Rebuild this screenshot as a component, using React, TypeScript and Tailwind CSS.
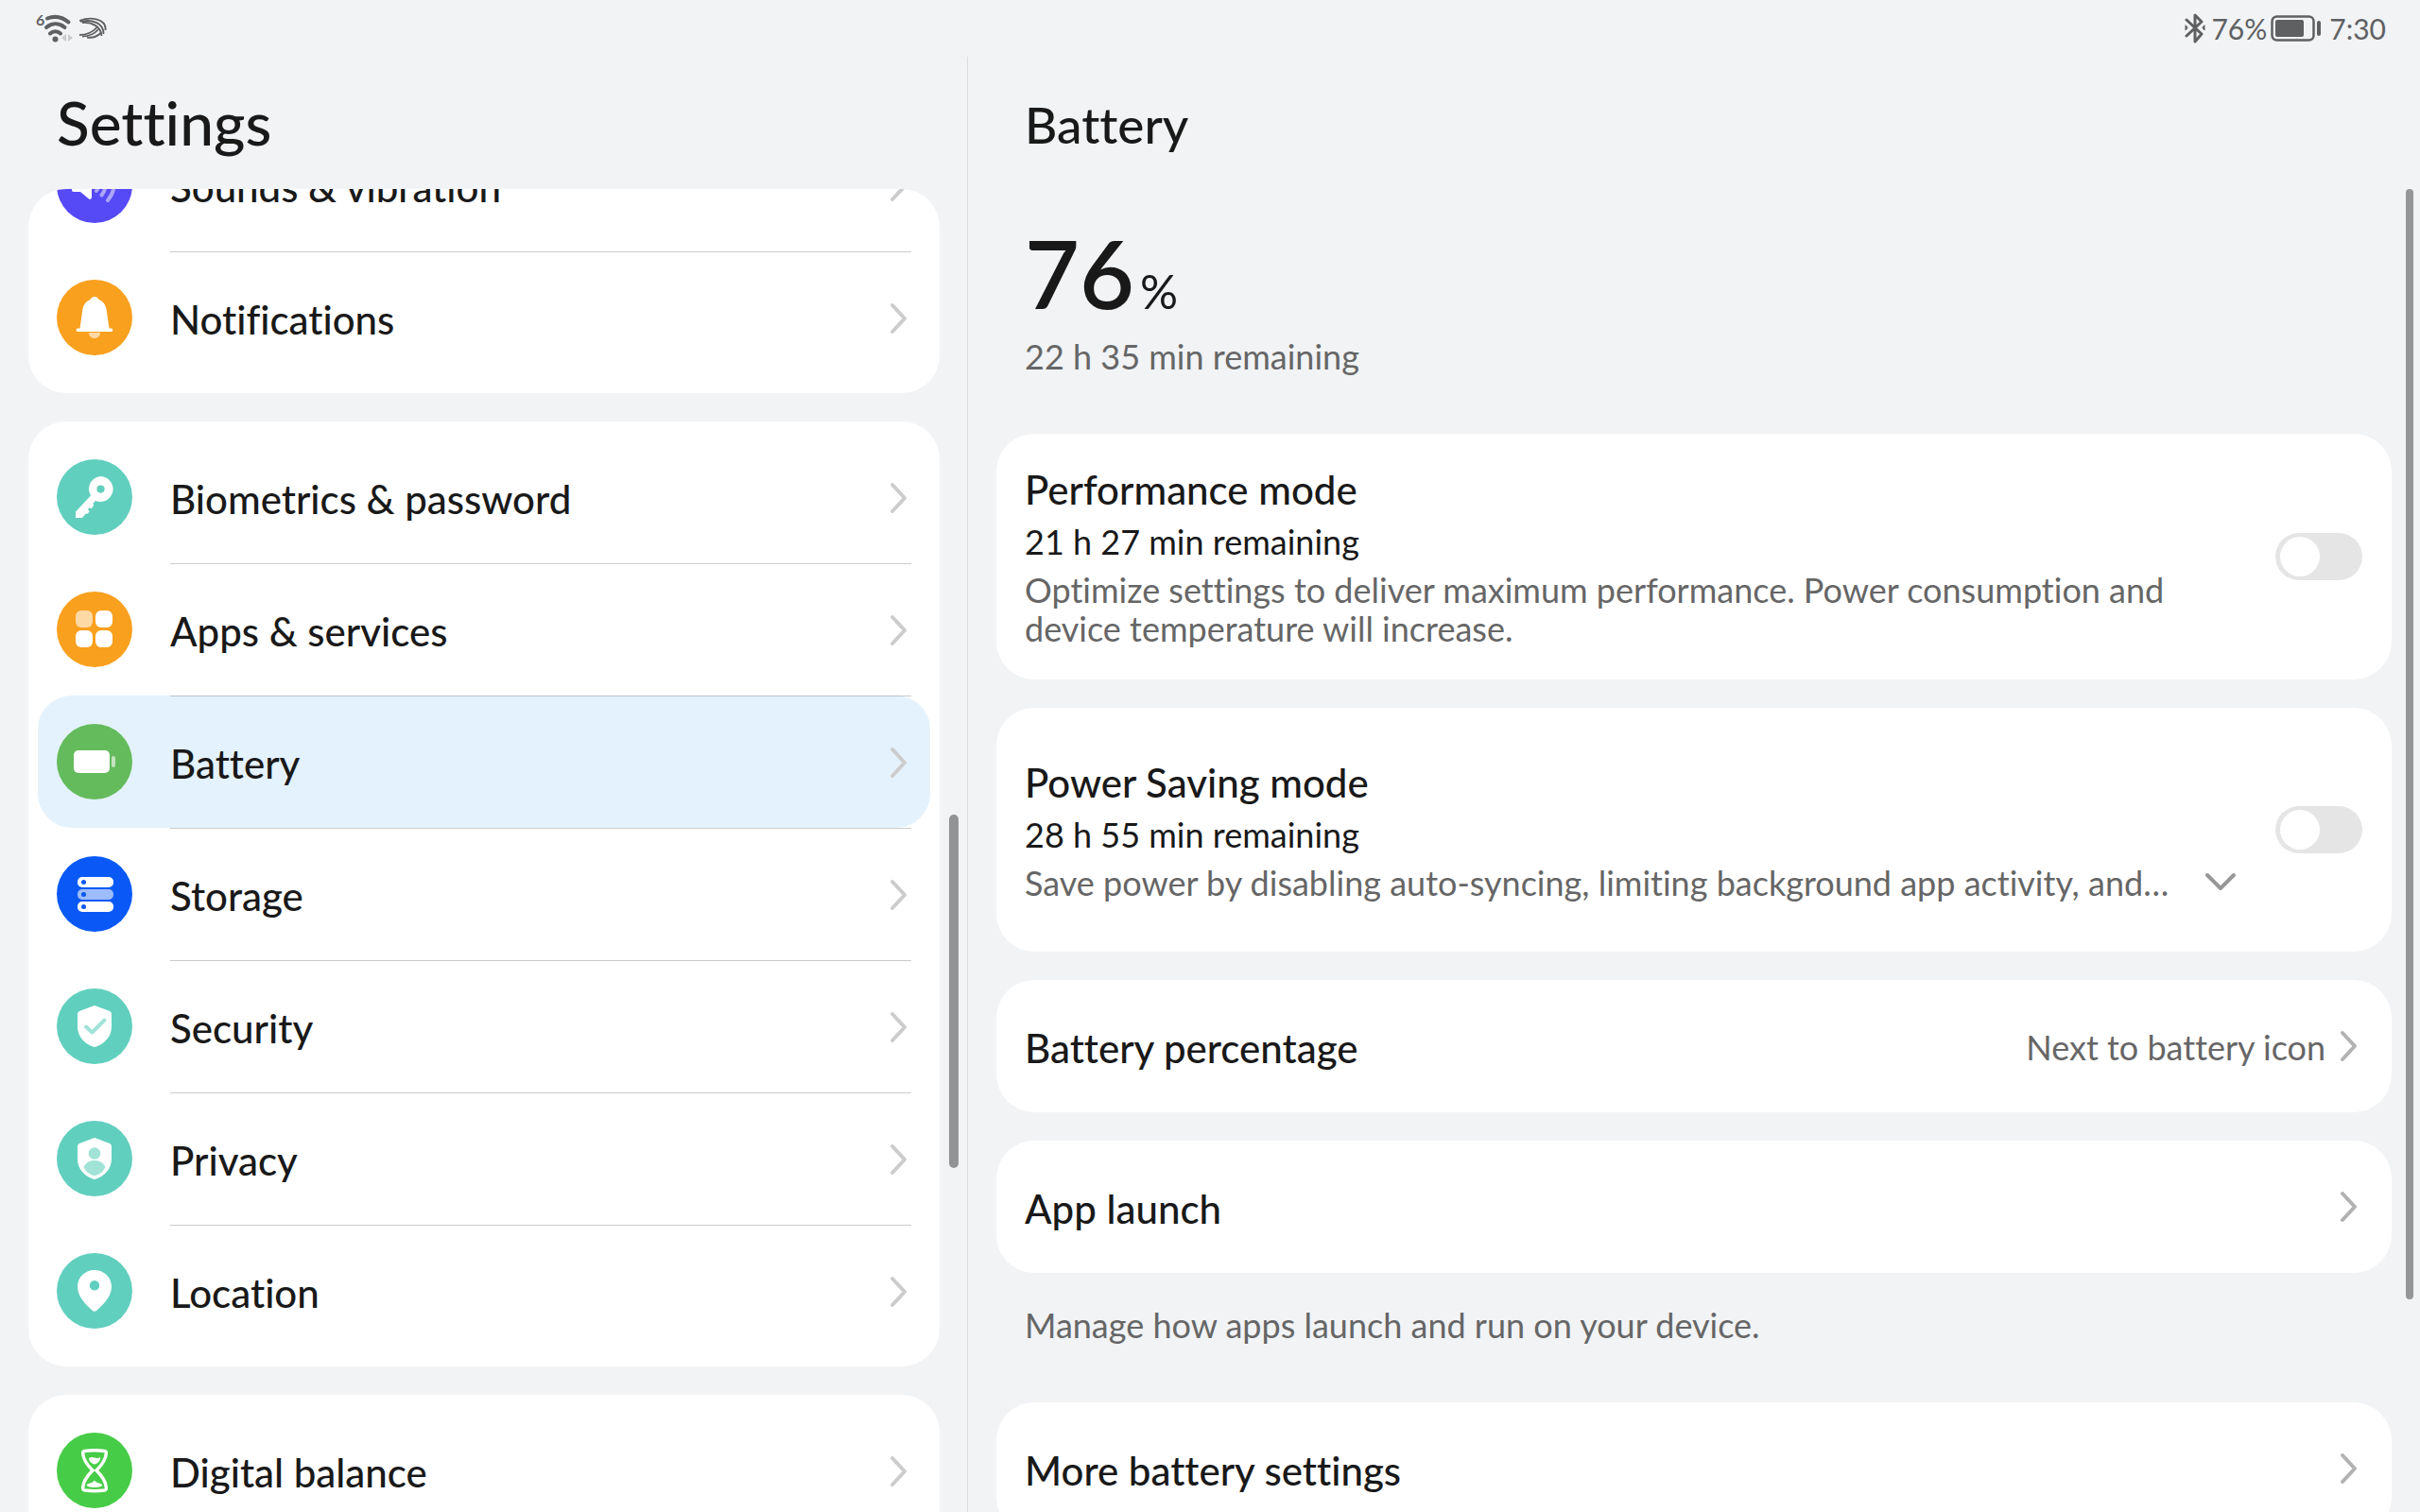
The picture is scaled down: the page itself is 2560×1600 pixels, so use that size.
import type { ReactNode } from "react";

const ChevronRight = ({ className }: { className: string }) => (
  <svg
    className={`h-9 w-6 shrink-0 ${className}`}
    viewBox="0 0 24 36"
    fill="none"
    stroke="currentColor"
    strokeWidth="4"
    strokeLinecap="round"
    strokeLinejoin="round"
  >
    <path d="M4 4l13 14L4 32" />
  </svg>
);

const icons: Record<string, ReactNode> = {
  sound: (
    <>
      <path
        d="M18 33h7l9-7.500c1-1 3 0 3 1.500v26c0 1.500-2 2.500-3 1.500L25 47h-7c-1.500 0-2-1-2-2V35c0-1 .5-2 2-2z"
        fill="#fff"
      />
      <g stroke="#fff" strokeOpacity=".5" strokeWidth="4" strokeLinecap="round" fill="none">
        <path d="M42 34q4 6 0 12" />
        <path d="M47.500 29.500q8 10.500 0 21" />
        <path d="M54 24q13 16 0 32" />
      </g>
    </>
  ),
  bell: (
    <>
      <path
        d="M40 18c-2.500 0-4 1.500-4.500 3C30 23 27.500 28 27 34l-2.500 17.500H22a1.800 1.800 0 0 0 0 3.500h36a1.800 1.800 0 0 0 0-3.500h-2.500L53 34c-.5-6-3-11-8.500-13-.5-1.500-2-3-4.500-3z"
        fill="#fff"
      />
      <path d="M34 56h12c0 3.500-2.500 6-6 6s-6-2.500-6-6z" fill="#fff" fillOpacity=".6" />
    </>
  ),
  key: (
    <path
      fill="#fff"
      fillRule="evenodd"
      d="M46.500 18a13.500 13.500 0 1 1-5.500 26l-2.500 2.500.5 2.500-2 3-3-.5-1 1.500 1.500 2-1.500 2.500-2.500.3L27 62h-7v-6.500l16-17A13.500 13.500 0 0 1 46.500 18zm0 9.500a4 4 0 1 0 0 8.200 4 4 0 0 0 0-8.200z"
    />
  ),
  apps: (
    <g fill="#fff">
      <rect x="20" y="20" width="18" height="18" rx="6" fillOpacity=".6" />
      <rect x="41" y="20" width="18" height="18" rx="6" />
      <rect x="20" y="41" width="18" height="18" rx="6" />
      <rect x="41" y="41" width="18" height="18" rx="6" />
    </g>
  ),
  battery: (
    <g fill="#fff">
      <rect x="18" y="28" width="38" height="24" rx="5" />
      <rect x="58" y="34" width="4" height="12" rx="2" fillOpacity=".6" />
    </g>
  ),
  storage: (
    <>
      <rect x="22" y="22" width="38" height="11" rx="5" fill="#fff" />
      <rect x="22" y="35" width="38" height="11" rx="5" fill="#fff" fillOpacity=".6" />
      <rect x="22" y="48" width="38" height="11" rx="5" fill="#fff" />
      <g fill="#0a59f7">
        <circle cx="28.500" cy="27.500" r="2.500" />
        <circle cx="28.500" cy="40.500" r="2.500" />
        <circle cx="28.500" cy="53.500" r="2.500" />
      </g>
    </>
  ),
  security: (
    <>
      <path
        d="M38.500 18.500q1.500-.8 3 0L56 24q2 .8 2 3v13c0 11-7 18-16 21.500q-2 .8-4 0C29 58 22 51 22 40V27q0-2.200 2-3z"
        fill="#fff"
      />
      <path
        d="M31 40.500l6.500 6 13-13"
        fill="none"
        stroke="#a2e3d8"
        strokeWidth="4"
        strokeLinecap="round"
        strokeLinejoin="round"
      />
    </>
  ),
  privacy: (
    <>
      <path
        d="M38.500 18.500q1.500-.8 3 0L56 24q2 .8 2 3v13c0 11-7 18-16 21.500q-2 .8-4 0C29 58 22 51 22 40V27q0-2.200 2-3z"
        fill="#fff"
      />
      <circle cx="40" cy="34.500" r="6.300" fill="#a2e3d8" />
      <path
        d="M28.500 49c2-4.500 6-7 11.500-7s9.500 2.500 11.500 7c-2.500 5-6.500 8.500-11.500 9-5-.5-9-4-11.500-9z"
        fill="#a2e3d8"
      />
    </>
  ),
  location: (
    <path
      fill="#fff"
      fillRule="evenodd"
      d="M40 18c10 0 18 7.500 18 17.500C58 45 51 53 42 61q-2 1.500-4 0C29 53 22 45 22 35.500 22 25.500 30 18 40 18zm0 11a5.200 5.200 0 1 0 0 10.400A5.200 5.200 0 0 0 40 29z"
    />
  ),
  hourglass: (
    <>
      <path
        d="M29.500 19.500q10.500-1.500 21 0 2 .3 1.800 2.500C52 29 46 36 42 40c4 4 10 11 10.300 18 .2 2.200 0 2.700-1.800 3q-10.500 1.500-21 0c-1.800-.3-2-.8-1.800-3C28 51 34 44 38 40c-4-4-10-11-10.300-18q-.2-2.200 1.800-2.500z"
        fill="none"
        stroke="#fff"
        strokeWidth="3.500"
      />
      <path d="M34 27q3-1.500 6-.5t6-.5c1 3-2.500 7-6 7.500-3-.5-6-3.500-6-6.500z" fill="#fff" />
      <path d="M32 55c2-2 6-1.500 8-4.500 2 3 6 2.500 8 4.500 1.500 2-4 3-8 3s-9.500-1-8-3z" fill="#fff" />
    </>
  ),
};

interface MenuItem {
  label: string;
  icon: string;
  color: string;
  active?: boolean;
}

const groups: MenuItem[][] = [
  [
    { label: "Sounds & vibration", icon: "sound", color: "bg-[#564af7]" },
    { label: "Notifications", icon: "bell", color: "bg-[#f9a01e]" },
  ],
  [
    { label: "Biometrics & password", icon: "key", color: "bg-[#61cfbe]" },
    { label: "Apps & services", icon: "apps", color: "bg-[#f9a01e]" },
    { label: "Battery", icon: "battery", color: "bg-[#64bb5c]", active: true },
    { label: "Storage", icon: "storage", color: "bg-[#0a59f7]" },
    { label: "Security", icon: "security", color: "bg-[#61cfbe]" },
    { label: "Privacy", icon: "privacy", color: "bg-[#61cfbe]" },
    { label: "Location", icon: "location", color: "bg-[#61cfbe]" },
  ],
  [{ label: "Digital balance", icon: "hourglass", color: "bg-[#47cc47]" }],
];

const MenuRow = ({ item, first }: { item: MenuItem; first: boolean }) => (
  <li>
    <a
      href="#"
      aria-current={item.active ? "page" : undefined}
      className={`flex h-[140px] items-center rounded-[36px] pl-5 ${item.active ? "bg-[#e4f2fd]" : ""}`}
    >
      <span className={`mr-10 size-20 shrink-0 rounded-full ${item.color}`}>
        <svg viewBox="0 0 80 80" className="size-20">
          {icons[item.icon]}
        </svg>
      </span>
      <span
        className={`mr-5 flex h-full flex-1 items-center justify-between border-t ${first ? "border-transparent" : "border-black/20"}`}
      >
        <span className="pt-[2px] text-[42px] leading-[48px] font-medium">{item.label}</span>
        <ChevronRight className="text-[#cccccc]" />
      </span>
    </a>
  </li>
);

const StatusBar = () => (
  <header className="flex h-[60px] shrink-0 items-center justify-between pr-9 pl-[38px] text-[#5f6062]">
    <div className="flex items-center gap-[6px]">
      <svg viewBox="0 0 40 40" className="size-10" fill="none" stroke="currentColor">
        <text x="0" y="17" fontSize="16" fontWeight="700" fill="currentColor" stroke="none">
          6
        </text>
        <g strokeWidth="4" strokeLinecap="round">
          <path d="M12 9.500c8-3 16-1.500 22.500 4" />
          <path d="M11 19c6-5 13.500-5 19.500 0" />
          <path d="M15 25.500c3-3 8-3 11 0" />
        </g>
        <circle cx="20.500" cy="31.500" r="3" fill="currentColor" stroke="none" />
        <path d="M32 26v8l-5-4zM34 26v8l5-4z" fill="#c9cacc" stroke="none" />
      </svg>
      <svg
        viewBox="0 0 30 24"
        className="h-6 w-[30px]"
        fill="none"
        stroke="currentColor"
        strokeWidth="1.800"
      >
        <path d="M0 4c12-5 29-2 27.500 10" />
        <path d="M1 5c12-3 25 1 24.500 13" />
        <path d="M3 6c10-1 20 4 20.500 14" />
        <path d="M0 19c8 0 14-3 18.500-8" />
        <path d="M3 20.500c7 0 13-2.500 17-7.500" />
        <path d="M8 21.500c6 1 11-1 15-5" />
      </svg>
    </div>
    <div className="flex items-center text-[30px] leading-9">
      <svg
        viewBox="0 0 22 32"
        className="mr-[6px] h-8 w-[22px]"
        fill="none"
        stroke="currentColor"
        strokeWidth="3"
        strokeLinejoin="round"
        strokeLinecap="round"
      >
        <path d="M2 7l16 15-7 8V2l7 7L2 24" />
        <path d="M1 13v5l2-2.500zM21 13v5l-2-2.500z" fill="currentColor" strokeWidth="1" />
      </svg>
      <span>76%</span>
      <svg viewBox="0 0 54 28" className="ml-1 h-7 w-[54px]">
        <rect
          x="1.500"
          y="1.500"
          width="44"
          height="25"
          rx="5"
          fill="none"
          stroke="currentColor"
          strokeWidth="2.500"
        />
        <rect x="5" y="5" width="30" height="18" rx="2" fill="currentColor" />
        <rect x="49" y="6" width="4" height="16" rx="2" fill="currentColor" />
      </svg>
      <time className="ml-2">7:30</time>
    </div>
  </header>
);

const Switch = ({ id }: { id: string }) => (
  <span className="relative flex h-[50px] w-[92px] shrink-0">
    <input
      id={id}
      type="checkbox"
      role="switch"
      className="peer h-full w-full appearance-none rounded-full bg-[#e5e5e5] checked:bg-[#0a59f7]"
    />
    <span className="pointer-events-none absolute top-1 left-[5px] size-[42px] rounded-full bg-white peer-checked:left-[45px]" />
  </span>
);

const LinkCard = ({ label, value }: { label: string; value?: string }) => (
  <a
    href="#"
    className="flex h-[140px] shrink-0 items-center rounded-[40px] bg-white pr-8 pl-[30px]"
  >
    <span className="flex-1 pt-1 text-[42px] leading-[48px] font-medium">{label}</span>
    {value && (
      <span className="mr-[14px] pt-[2px] text-[36px] leading-[42px] text-[#666666]">
        {value}
      </span>
    )}
    <ChevronRight className="text-[#b2b2b2]" />
  </a>
);

export default function App() {
  return (
    <div className="flex h-screen flex-col overflow-hidden bg-[#f1f3f5] font-[Lato,sans-serif] text-[#191919] [font-variant-ligatures:none]">
      <StatusBar />
      <div className="flex min-h-0 flex-1">
        <aside className="flex w-2/5 shrink-0 flex-col border-r border-[#dcdee0]">
          <h1 className="h-[140px] shrink-0 pt-[34px] pl-[60px] text-[64px] leading-[72px] font-medium">
            Settings
          </h1>
          <div className="flex min-h-0 flex-1 pl-[30px]">
            <nav className="flex min-w-0 flex-1 flex-col justify-start gap-[30px] overflow-hidden rounded-t-[40px]">
              {groups.map((group, key) => (
                <ul
                  key={key}
                  className={`shrink-0 rounded-[40px] bg-white p-[10px] ${key === 0 ? "-mt-[84px]" : ""}`}
                >
                  {group.map((item, index) => (
                    <MenuRow key={item.label} item={item} first={index === 0} />
                  ))}
                </ul>
              ))}
            </nav>
            <div className="flex w-[29px] justify-center pt-[662px]">
              <div className="h-[374px] w-[10px] rounded-full bg-[#929394]" />
            </div>
          </div>
        </aside>

        <main className="flex min-w-0 flex-1 flex-col">
          <h2 className="h-[140px] shrink-0 pt-[42px] pl-[60px] text-[53px] leading-[60px] font-medium">
            Battery
          </h2>
          <div className="flex min-h-0 flex-1 pl-[30px]">
            <div className="flex min-w-0 flex-1 flex-col gap-[30px] overflow-hidden">
              <section className="h-[229px] shrink-0 pt-8 pl-[30px]">
                <p className="flex items-baseline gap-[6px]">
                  <span className="text-[100px] leading-[112px] font-semibold">76</span>
                  <span className="text-[50px]">%</span>
                </p>
                <p className="mt-[10px] text-[36px] leading-[42px] text-[#666666]">
                  22 h 35 min remaining
                </p>
              </section>

              <section className="flex h-[260px] shrink-0 items-center gap-24 rounded-[40px] bg-white pr-[31px] pl-[30px]">
                <div className="flex min-w-0 flex-1 flex-col gap-[10px] pt-[2px]">
                  <label
                    htmlFor="performance"
                    className="text-[42px] leading-[48px] font-medium"
                  >
                    Performance mode
                  </label>
                  <p className="text-[36px] leading-[42px]">21 h 27 min remaining</p>
                  <p className="text-[36px] leading-[41px] text-[#666666]">
                    Optimize settings to deliver maximum performance. Power consumption and device
                    temperature will increase.
                  </p>
                </div>
                <Switch id="performance" />
              </section>

              <section className="flex h-[258px] shrink-0 items-center gap-10 rounded-[40px] bg-white pr-[31px] pl-[30px]">
                <div className="flex min-w-0 flex-1 flex-col gap-[10px] pt-[2px]">
                  <label
                    htmlFor="power-saving"
                    className="text-[42px] leading-[48px] font-medium"
                  >
                    Power Saving mode
                  </label>
                  <p className="text-[36px] leading-[42px]">28 h 55 min remaining</p>
                  <div className="flex items-center justify-between">
                    <p className="text-[36px] leading-[41px] text-[#666666]">
                      Save power by disabling auto-syncing, limiting background app activity, and…
                    </p>
                    <button type="button" aria-label="Show more">
                      <svg
                        viewBox="0 0 36 24"
                        className="h-6 w-9"
                        fill="none"
                        stroke="#979797"
                        strokeWidth="4"
                        strokeLinecap="round"
                        strokeLinejoin="round"
                      >
                        <path d="M4 4l14 14L32 4" />
                      </svg>
                    </button>
                  </div>
                </div>
                <Switch id="power-saving" />
              </section>

              <LinkCard label="Battery percentage" value="Next to battery icon" />
              <LinkCard label="App launch" />
              <p className="h-[77px] shrink-0 pt-1 pl-[30px] text-[36px] leading-[42px] text-[#666666]">
                Manage how apps launch and run on your device.
              </p>
              <LinkCard label="More battery settings" />
            </div>
            <div className="flex w-[30px] justify-end pr-[7px]">
              <div className="h-[1175px] w-2 rounded-full bg-[#959697]" />
            </div>
          </div>
        </main>
      </div>
    </div>
  );
}
